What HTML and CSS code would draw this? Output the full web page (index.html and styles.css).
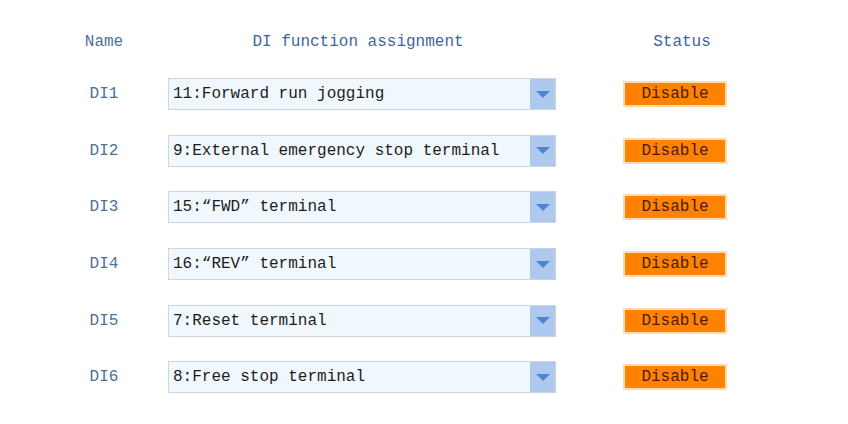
FILE: index.html
```html
<!DOCTYPE html>
<html lang="en">
<head>
  <meta charset="UTF-8" />
  <title>DI Assignment</title>
  <link rel="stylesheet" href="styles.css">
</head>
<body>
  <div class="table">
    <div class="head name">Name</div>
    <div class="head func">DI function assignment</div>
    <div class="head title">Status</div>

    <div class="name">DI1</div>
    <div class="select"><span>11:Forward run jogging</span><i class="arrow"></i></div>
    <div class="status"><span class="badge">Disable</span></div>

    <div class="name">DI2</div>
    <div class="select"><span>9:External emergency stop terminal</span><i class="arrow"></i></div>
    <div class="status"><span class="badge">Disable</span></div>

    <div class="name">DI3</div>
    <div class="select"><span>15:“FWD” terminal</span><i class="arrow"></i></div>
    <div class="status"><span class="badge">Disable</span></div>

    <div class="name">DI4</div>
    <div class="select"><span>16:“REV” terminal</span><i class="arrow"></i></div>
    <div class="status"><span class="badge">Disable</span></div>

    <div class="name">DI5</div>
    <div class="select"><span>7:Reset terminal</span><i class="arrow"></i></div>
    <div class="status"><span class="badge">Disable</span></div>

    <div class="name">DI6</div>
    <div class="select"><span>8:Free stop terminal</span><i class="arrow"></i></div>
    <div class="status"><span class="badge">Disable</span></div>
  </div>
</body>
</html>
```

FILE: styles.css
```css
body {
  margin: 0;
  background: #fff;
  font-family: "Liberation Mono", "DejaVu Sans Mono", monospace;
  font-size: 16px;
}

.table {
  display: grid;
  grid-template-columns: 88px 388px 220px;
  grid-template-rows: 48px;
  grid-auto-rows: 56.6px;
  column-gap: 20px;
  padding: 18px 0 0 60px;
  align-items: center;
}

.head {
  color: #3f64a0;
}

.head.func {
  text-align: center;
  padding-right: 8px;
}

.head.title {
  text-align: center;
  padding-right: 8px;
}

.name {
  text-align: center;
  color: #4f6e9c;
}

.select {
  height: 32px;
  box-sizing: border-box;
  border: 1px solid #cbd7e0;
  background: #f1f8fd;
  display: flex;
  align-items: center;
  color: #1c1c1c;
}

.select span {
  flex: 1;
  padding-left: 4px;
  white-space: nowrap;
}

.arrow {
  width: 25px;
  height: 100%;
  background: #afc9ee;
  display: flex;
  align-items: center;
  justify-content: center;
}

.arrow::after {
  content: "";
  border-left: 7px solid transparent;
  border-right: 7px solid transparent;
  border-top: 7px solid #4f84d2;
}

.status {
  display: flex;
  justify-content: center;
  margin-left: -22px;
}

.badge {
  width: 100px;
  height: 22px;
  line-height: 22px;
  text-align: center;
  background: #ff8200;
  border: 2px solid #ffd9b0;
  color: #4a1c00;
}
```
